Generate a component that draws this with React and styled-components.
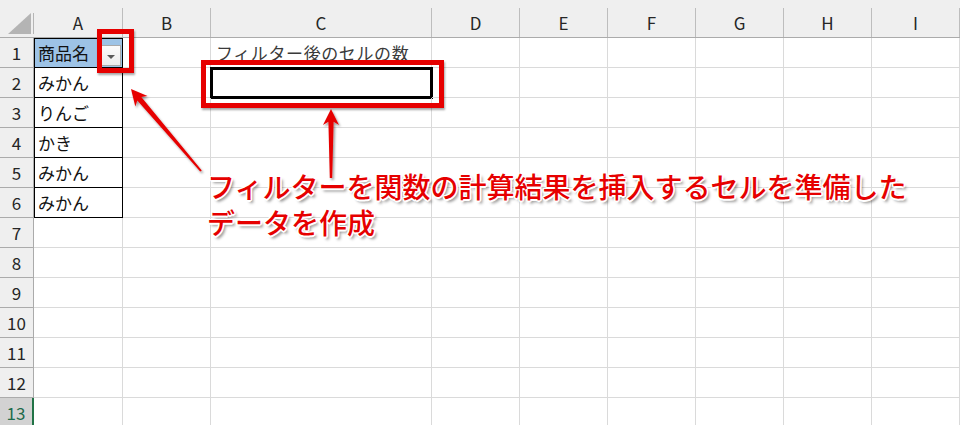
import React from "react"
import styled, { createGlobalStyle, css } from "styled-components"

const GlobalStyle = createGlobalStyle`
  html, body {
    margin: 0;
    padding: 0;
    background: #fff;
  }
  body {
    font-family: "Noto Sans CJK JP", "Noto Sans", sans-serif;
  }
`

const RED = "#e60000"
const GRID = "#dadada"
const HEAD_LINE = "#ababab"

const columns = [
  { name: "A", width: 89 },
  { name: "B", width: 88 },
  { name: "C", width: 221 },
  { name: "D", width: 88 },
  { name: "E", width: 88 },
  { name: "F", width: 88 },
  { name: "G", width: 88 },
  { name: "H", width: 88 },
  { name: "I", width: 88 },
]

const data = {
  "A1": "商品名",
  "A2": "みかん",
  "A3": "りんご",
  "A4": "かき",
  "A5": "みかん",
  "A6": "みかん",
  "C1": "フィルター後のセルの数",
}

const Page = styled.div`
  position: relative;
  width: 960px;
  height: 425px;
  overflow: hidden;
  background: #fff;
`

const Sheet = styled.div`
  display: grid;
  grid-template-columns: 34px ${columns.map((c) => c.width + "px").join(" ")};
  grid-template-rows: 38px repeat(13, 30px);
`

const Corner = styled.div`
  background: #efefef;
  border-bottom: 1px solid ${HEAD_LINE};
  display: flex;
  align-items: flex-end;
  justify-content: flex-end;
  padding: 0 0 0 0;
  box-sizing: border-box;
`

const CornerMark = styled.div`
  width: 23px;
  height: 21px;
  margin: 0 1px 3px 0;
  border-right: 1px solid #b5b5b5;
  margin-right: 0;
  padding-right: 2px;
  display: flex;
  align-items: flex-end;
  svg {
    display: block;
  }
`

const ColHead = styled.div`
  background: #efefef;
  display: flex;
  align-items: flex-end;
  box-sizing: border-box;
  border-bottom: 1px solid ${HEAD_LINE};
`

const ColLabel = styled.div`
  flex: 1;
  height: 29px;
  box-sizing: border-box;
  border-right: 1px solid #bdbdbd;
  display: flex;
  align-items: center;
  justify-content: center;
  font-size: 17px;
  color: #262626;
  padding-bottom: 1px;
`

const RowHead = styled.div`
  background: ${(p) => (p.$active ? "#d2d2d2" : "#efefef")};
  color: ${(p) => (p.$active ? "#1e6b4a" : "#262626")};
  box-sizing: border-box;
  border-bottom: 1px solid ${HEAD_LINE};
  border-right: ${(p) => (p.$active ? "2px solid #217346" : `1px solid ${HEAD_LINE}`)};
  display: flex;
  align-items: center;
  justify-content: center;
  font-size: 17px;
`

const Cell = styled.div`
  box-sizing: border-box;
  border-right: 1px solid ${GRID};
  border-bottom: 1px solid ${GRID};
  display: flex;
  align-items: center;
  justify-content: space-between;
  padding: 0 1px 0 4px;
  font-size: 17px;
  color: #111;
  white-space: nowrap;
  overflow: visible;
  ${(p) =>
    p.$boxed &&
    css`
      border-right-color: #000;
      border-bottom-color: #000;
      box-shadow: inset 1px ${p.$first ? "1px" : "0"} 0 #000;
    `}
  ${(p) =>
    p.$header &&
    css`
      background: #9dc3e6;
      align-items: flex-end;
      padding-bottom: 1px;
      span {
        align-self: center;
      }
    `}
  ${(p) =>
    p.$thick &&
    css`
      outline: 3px solid #000;
      outline-offset: -2px;
    `}
  ${(p) =>
    p.$note &&
    css`
      color: #3a3a3a;
      letter-spacing: 0.6px;
      padding-left: 5px;
    `}
`

const FilterButton = styled.div`
  width: 21px;
  height: 21px;
  box-sizing: border-box;
  border: 1px solid #a9a9a9;
  background: linear-gradient(#fbfbfb, #ececec);
  display: flex;
  align-items: center;
  justify-content: center;
  padding-top: 2px;
  &::after {
    content: "";
    border-left: 4px solid transparent;
    border-right: 4px solid transparent;
    border-top: 4px solid #5a5a5a;
  }
`

const Highlight = styled.div`
  position: absolute;
  left: ${(p) => p.$x}px;
  top: ${(p) => p.$y}px;
  width: ${(p) => p.$w}px;
  height: ${(p) => p.$h}px;
  box-sizing: border-box;
  border: 5px solid ${RED};
  box-shadow: 1px 2px 2px rgba(0, 0, 0, 0.35);
`

const Overlay = styled.svg`
  position: absolute;
  left: 0;
  top: 0;
  pointer-events: none;
`

const Callout = styled.div`
  position: absolute;
  left: 207px;
  top: 168px;
  font-size: 28px;
  line-height: 36px;
  font-weight: 500;
  color: ${RED};
  white-space: nowrap;
  text-shadow: 1.5px 0 #fff, -1.5px 0 #fff, 0 1.5px #fff, 0 -1.5px #fff,
    1.2px 1.2px #fff, -1.2px -1.2px #fff, 1.2px -1.2px #fff, -1.2px 1.2px #fff,
    2.5px 2.5px 3px rgba(0, 0, 0, 0.45);
`

// tapered arrow outline from tail to tip
function arrowPoints([tx, ty], [hx, hy], head, half, near, far) {
  const dx = hx - tx
  const dy = hy - ty
  const len = Math.hypot(dx, dy)
  const ux = dx / len
  const uy = dy / len
  const px = -uy
  const py = ux
  const bx = hx - ux * head
  const by = hy - uy * head
  const nx = hx - ux * head * 0.8
  const ny = hy - uy * head * 0.8
  const pts = [
    [tx + px * far, ty + py * far],
    [nx + px * near, ny + py * near],
    [bx + px * half, by + py * half],
    [hx, hy],
    [bx - px * half, by - py * half],
    [nx - px * near, ny - py * near],
    [tx - px * far, ty - py * far],
  ]
  return pts.map((p) => p.map((v) => v.toFixed(1)).join(",")).join(" ")
}

const App = () => {
  const rows = Array.from({ length: 13 }, (_, i) => i + 1)

  return (
    <Page>
      <GlobalStyle />
      <Sheet>
        <Corner>
          <CornerMark>
            <svg width="23" height="21" viewBox="0 0 23 21">
              <polygon points="23,0 23,21 0,21" fill="#b4b4b4" />
            </svg>
          </CornerMark>
        </Corner>
        {columns.map((c) => (
          <ColHead key={c.name}>
            <ColLabel>{c.name}</ColLabel>
          </ColHead>
        ))}
        {rows.map((r) => (
          <React.Fragment key={r}>
            <RowHead $active={r === 13}>{r}</RowHead>
            {columns.map((c) => {
              const id = c.name + r
              const boxed = c.name === "A" && r <= 6
              return (
                <Cell
                  key={id}
                  $boxed={boxed}
                  $first={r === 1}
                  $header={id === "A1"}
                  $thick={id === "C2"}
                  $note={id === "C1"}
                >
                  {data[id] && <span>{data[id]}</span>}
                  {id === "A1" && <FilterButton />}
                </Cell>
              )
            })}
          </React.Fragment>
        ))}
      </Sheet>

      <Highlight $x={97} $y={29} $w={37} $h={44} />
      <Highlight $x={201} $y={60} $w={243} $h={48} />

      <Overlay width="960" height="425">
        <defs>
          <filter id="drop" x="-20%" y="-20%" width="140%" height="140%">
            <feDropShadow dx="1.5" dy="2" stdDeviation="1.2" floodColor="#000" floodOpacity="0.4" />
          </filter>
        </defs>
        <g fill={RED} filter="url(#drop)">
          <polygon points={arrowPoints([201, 171], [131, 89], 16, 8, 2.6, 1)} />
          <polygon points={arrowPoints([331, 178], [331, 109], 16, 8, 2.6, 1.2)} />
        </g>
      </Overlay>

      <Callout>
        フィルターを関数の計算結果を挿入するセルを準備した
        <br />
        データを作成
      </Callout>
    </Page>
  )
}

export default App
